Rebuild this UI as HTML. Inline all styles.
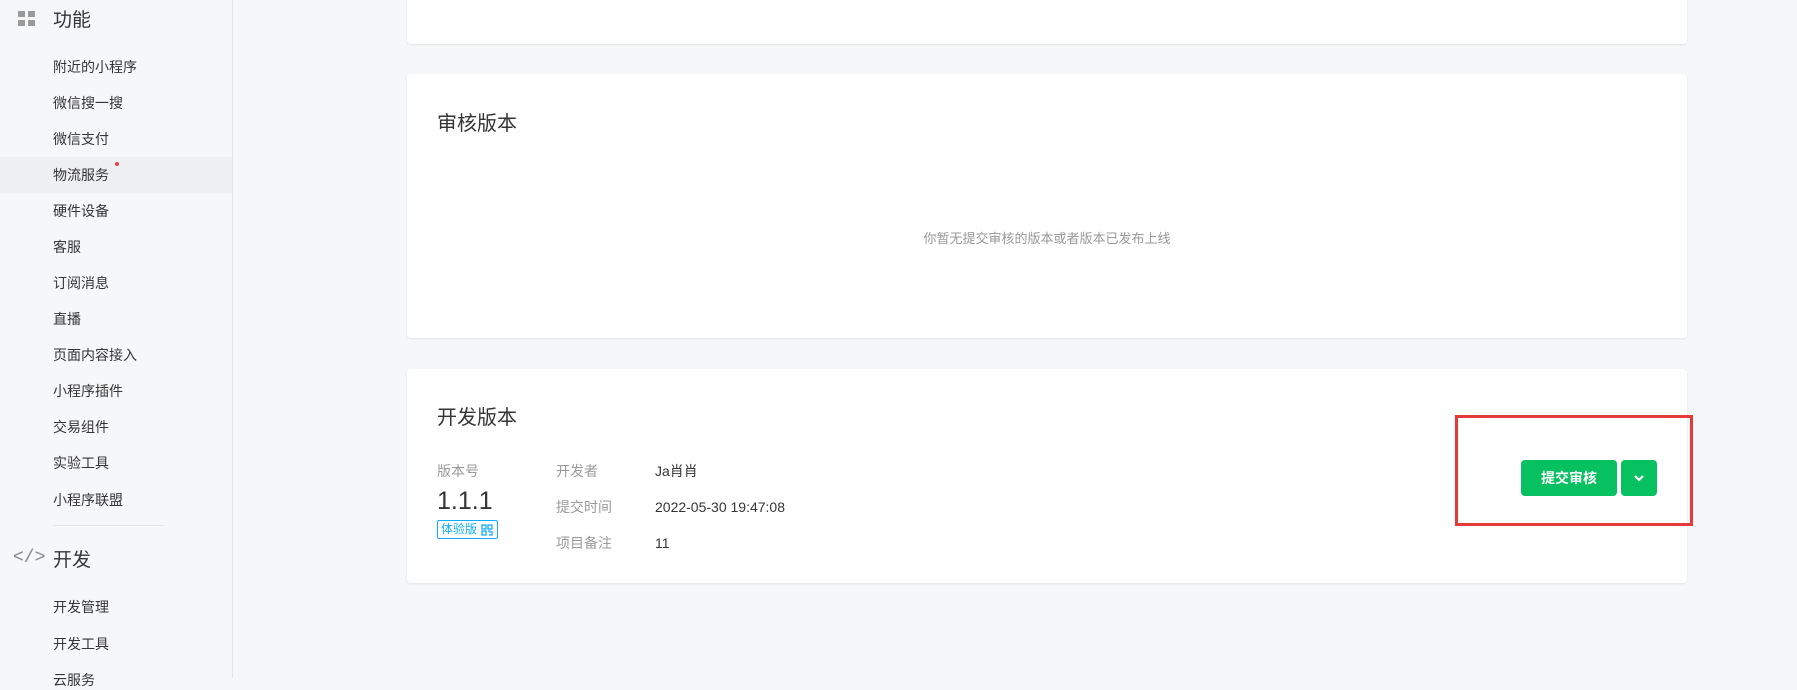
<!DOCTYPE html>
<html><head><meta charset="utf-8"><style>
*{margin:0;padding:0;box-sizing:border-box}
body{width:1797px;height:678px;overflow:hidden;background:#f6f7f9;font-family:"Liberation Sans","Noto Sans CJK SC",sans-serif;color:#353535;position:relative}
.sb{position:absolute;left:0;top:0;width:233px;height:678px;background:#f6f7f9;border-right:1px solid #e4e6ea}
.ab{position:absolute;white-space:nowrap}
.it{position:absolute;left:53px;font-size:14px;line-height:20px;color:#353535}
.hd{position:absolute;left:53px;font-size:19px;line-height:24px;color:#353535}
.card{position:absolute;left:407px;width:1280px;background:#fff;border-radius:4px;box-shadow:0 1px 2px rgba(0,0,0,.08)}
.lbl{position:absolute;font-size:14px;color:#9a9a9a;line-height:20px}
.val{position:absolute;font-size:14px;color:#353535;line-height:20px}
</style></head><body>
<div class="sb">
 <svg class="ab" style="left:18px;top:11px" width="18" height="18" viewBox="0 0 18 18" fill="#9a9a9a"><rect x="0" y="0" width="7" height="6"/><rect x="10" y="0" width="7" height="6"/><rect x="0" y="9" width="7" height="6"/><rect x="10" y="9" width="7" height="6"/></svg>
 <div class="hd" style="top:9px">功能</div>
 <div class="ab" style="left:0;top:157px;width:232px;height:36px;background:#eeeff2"></div>
 <div class="it" style="top:57px">附近的小程序</div>
 <div class="it" style="top:93px">微信搜一搜</div>
 <div class="it" style="top:129px">微信支付</div>
 <div class="it" style="top:165px">物流服务<span style="position:absolute;left:62px;top:-3px;width:4px;height:4px;border-radius:2px;background:#e64340"></span></div>
 <div class="it" style="top:201px">硬件设备</div>
 <div class="it" style="top:237px">客服</div>
 <div class="it" style="top:273px">订阅消息</div>
 <div class="it" style="top:309px">直播</div>
 <div class="it" style="top:345px">页面内容接入</div>
 <div class="it" style="top:381px">小程序插件</div>
 <div class="it" style="top:417px">交易组件</div>
 <div class="it" style="top:453px">实验工具</div>
 <div class="it" style="top:490px">小程序联盟</div>
 <div class="ab" style="left:53px;top:525px;width:111px;height:1px;background:#e4e6ea"></div>
 <div class="ab" style="left:13px;top:548px;font-size:18px;color:#888;font-family:'Liberation Mono',monospace">&lt;/&gt;</div>
 <div class="hd" style="top:549px">开发</div>
 <div class="it" style="top:597px">开发管理</div>
 <div class="it" style="top:634px">开发工具</div>
 <div class="it" style="top:670px">云服务</div>
</div>

<div class="card" style="top:-10px;height:54px"></div>

<div class="card" style="top:74px;height:264px">
 <div class="ab" style="left:30px;top:33px;font-size:20px;color:#353535">审核版本</div>
 <div class="ab" style="left:0;width:1280px;top:154px;text-align:center;font-size:13px;color:#999">你暂无提交审核的版本或者版本已发布上线</div>
</div>

<div class="card" style="top:369px;height:214px">
 <div class="ab" style="left:30px;top:32px;font-size:20px;color:#353535">开发版本</div>
 <div class="lbl" style="left:30px;top:92px">版本号</div>
 <div class="ab" style="left:30px;top:118px;font-size:25px;color:#353535">1.1.1</div>
 <div class="ab" style="left:30px;top:151px;height:19px;width:61px;border:1px solid #10aeff;border-radius:2px;color:#10aeff;font-size:12px;line-height:17px;padding-left:3px">体验版
  <svg style="position:absolute;right:4px;top:3px" width="12" height="12" viewBox="0 0 12 12" fill="none" stroke="#10aeff" stroke-width="1.3"><rect x="1" y="1" width="4" height="4"/><rect x="7" y="1" width="4" height="4"/><rect x="1" y="7" width="4" height="4"/><path d="M7 7h2v2M11 7v4H8"/></svg></div>
 <div class="lbl" style="left:149px;top:92px">开发者</div>
 <div class="lbl" style="left:149px;top:128px">提交时间</div>
 <div class="lbl" style="left:149px;top:164px">项目备注</div>
 <div class="val" style="left:248px;top:92px">Ja肖肖</div>
 <div class="val" style="left:248px;top:128px">2022-05-30 19:47:08</div>
 <div class="val" style="left:248px;top:164px">11</div>
</div>

<div class="ab" style="left:1521px;top:460px;width:96px;height:36px;background:#07c160;border-radius:4px;color:#fff;font-size:14px;font-weight:bold;line-height:36px;text-align:center">提交审核</div>
<div class="ab" style="left:1621px;top:460px;width:36px;height:36px;background:#07c160;border-radius:4px">
 <svg width="36" height="36" viewBox="0 0 36 36"><path d="M14 16l4 4 4-4" stroke="#fff" stroke-width="2.2" fill="none"/></svg>
</div>
<div class="ab" style="left:1455px;top:415px;width:238px;height:111px;border:3px solid #e5393c"></div>
</body></html>
